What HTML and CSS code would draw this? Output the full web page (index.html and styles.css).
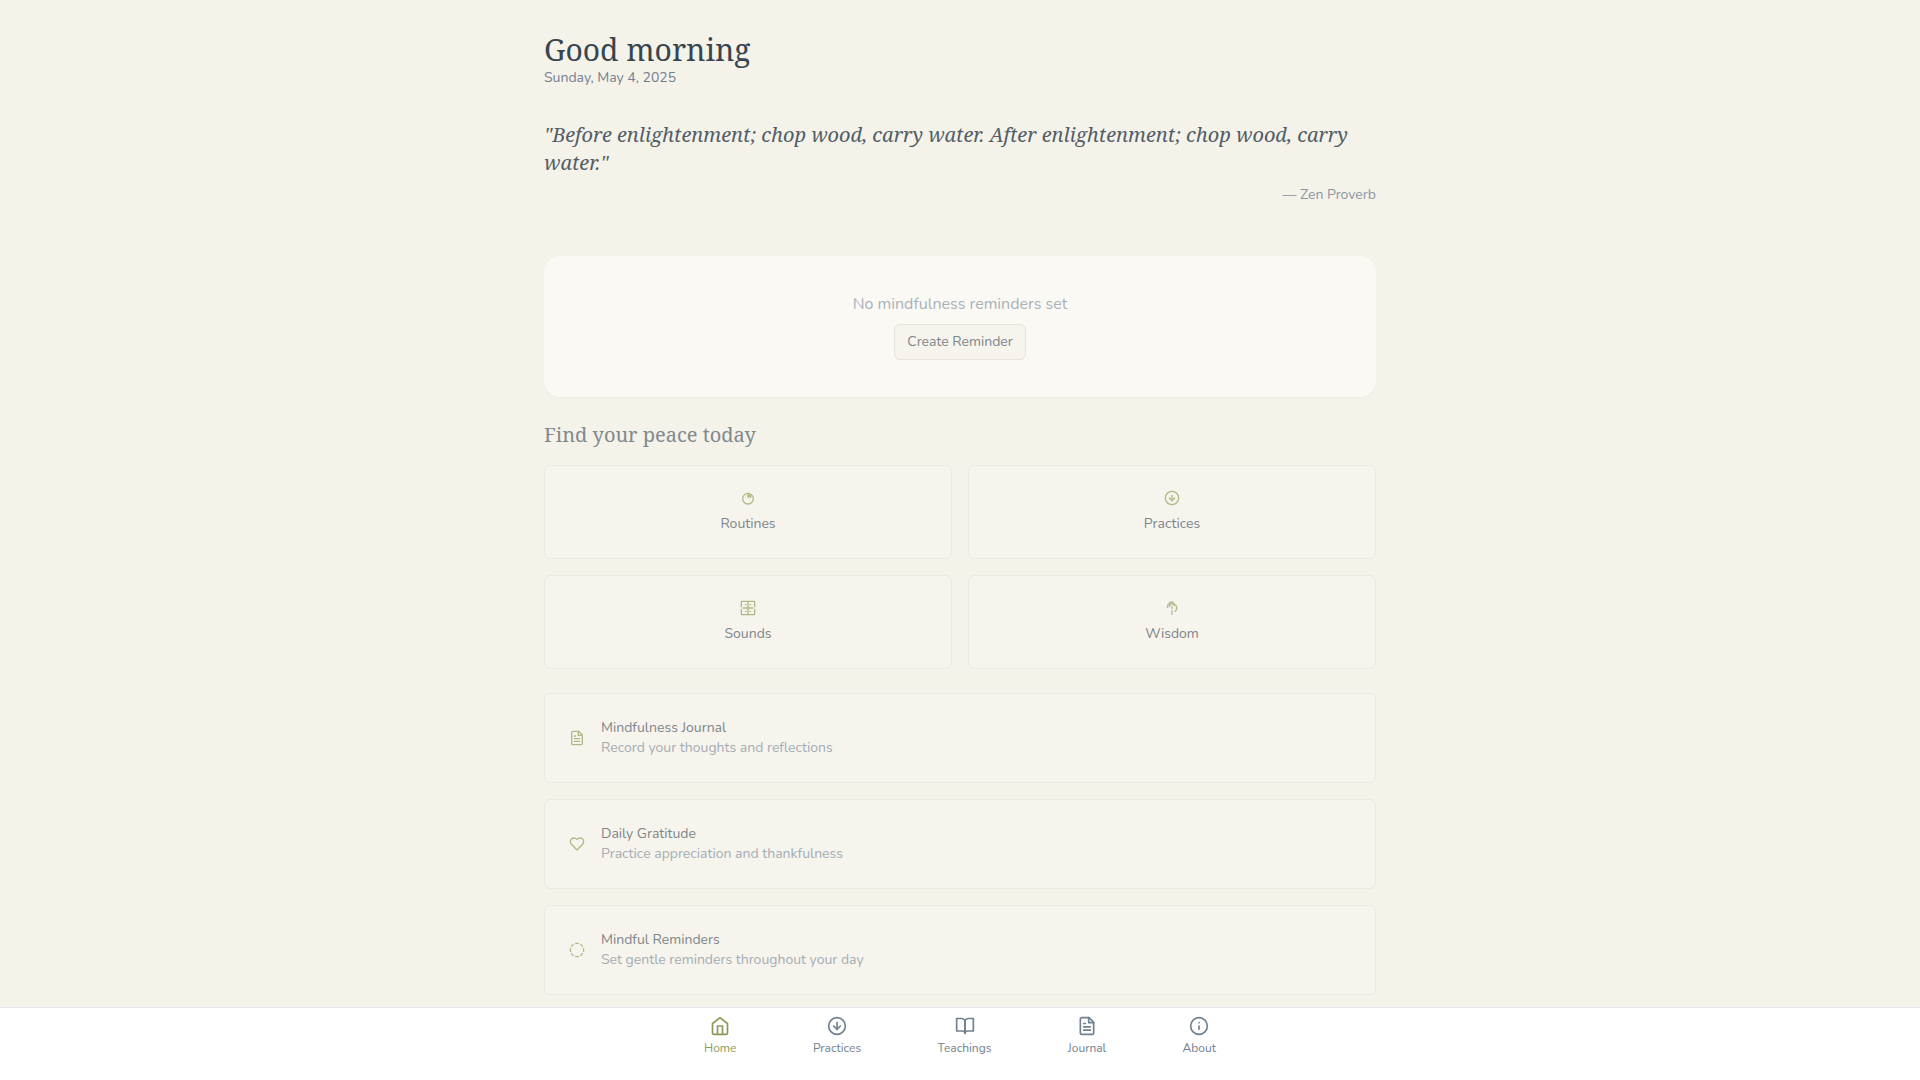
FILE: index.html
```html
<!DOCTYPE html>
<html lang="en">
<head>
    <meta charset="UTF-8">
    <meta name="viewport" content="width=device-width, initial-scale=1.0">
    <title>Good morning</title>
    <link rel="stylesheet" href="styles.css">
</head>
<body>

    <!-- Shared icons -->
    <svg class="sprite" aria-hidden="true">
        <symbol id="icon-practices" viewBox="0 0 24 24">
            <circle cx="12" cy="12" r="10"></circle>
            <path d="M12 8v8"></path>
            <path d="m8 12 4 4 4-4"></path>
        </symbol>
        <symbol id="icon-journal" viewBox="0 0 24 24">
            <path d="M14.5 2H6a2 2 0 0 0-2 2v16a2 2 0 0 0 2 2h12a2 2 0 0 0 2-2V7.500Z"></path>
            <path d="M14 2v6h6"></path>
            <path d="M16 13H8"></path>
            <path d="M16 17H8"></path>
            <path d="M10 9H8"></path>
        </symbol>
    </svg>

    <main class="page">
        <header class="greeting">
            <h1>Good morning</h1>
            <p class="date">Sunday, May 4, 2025</p>
        </header>

        <figure class="quote">
            <blockquote>"Before enlightenment; chop wood, carry water. After enlightenment; chop wood, carry water."</blockquote>
            <figcaption>— Zen Proverb</figcaption>
        </figure>

        <section class="reminder-card">
            <p>No mindfulness reminders set</p>
            <button type="button" class="reminder-button">Create Reminder</button>
        </section>

        <section class="peace">
            <h2>Find your peace today</h2>
            <div class="tiles">
                <a href="#routines" class="tile">
                    <svg class="icon" viewBox="0 0 24 24" aria-hidden="true">
                        <circle cx="12" cy="13" r="8"></circle>
                        <path d="M12 5v6l2-3 2 3V7"></path>
                    </svg>
                    <span>Routines</span>
                </a>
                <a href="#practices" class="tile">
                    <svg class="icon" aria-hidden="true"><use href="#icon-practices"></use></svg>
                    <span>Practices</span>
                </a>
                <a href="#sounds" class="tile">
                    <svg class="icon" viewBox="0 0 24 24" aria-hidden="true">
                        <path d="M2 10V3a1 1 0 0 1 1-1h18a1 1 0 0 1 1 1v7"></path>
                        <path d="M2 14v7a1 1 0 0 0 1 1h18a1 1 0 0 0 1-1v-7"></path>
                        <path d="M12 2v20"></path>
                        <path d="M5 12h14"></path>
                        <path d="M8 7h1"></path>
                        <path d="M15 7h1"></path>
                        <path d="M8 17h1"></path>
                        <path d="M15 17h1"></path>
                    </svg>
                    <span>Sounds</span>
                </a>
                <a href="#wisdom" class="tile">
                    <svg class="icon" viewBox="0 0 24 24" aria-hidden="true">
                        <path d="M5 11c0-3 1-5 3-6 1-2 4-3 6-1"></path>
                        <path d="M8 10c0-2 1-4 4-5l3 3"></path>
                        <path d="M14 6c3 0 5 3 5 6 0 2-1 4-2 5"></path>
                        <path d="M12 10v3"></path>
                        <path d="M12 16v5"></path>
                    </svg>
                    <span>Wisdom</span>
                </a>
            </div>
        </section>

        <section class="links">
            <a href="#journal" class="link-card">
                <svg class="icon" aria-hidden="true"><use href="#icon-journal"></use></svg>
                <span class="link-text">
                    <span class="link-title">Mindfulness Journal</span>
                    <span class="link-note">Record your thoughts and reflections</span>
                </span>
            </a>
            <a href="#gratitude" class="link-card">
                <svg class="icon" viewBox="0 0 24 24" aria-hidden="true">
                    <path d="M19 14c1.490-1.460 3-3.210 3-5.500A5.500 5.500 0 0 0 16.500 3c-1.760 0-3 .5-4.500 2-1.500-1.500-2.740-2-4.500-2A5.500 5.500 0 0 0 2 8.500c0 2.300 1.500 4.050 3 5.500l7 7Z"></path>
                </svg>
                <span class="link-text">
                    <span class="link-title">Daily Gratitude</span>
                    <span class="link-note">Practice appreciation and thankfulness</span>
                </span>
            </a>
            <a href="#reminders" class="link-card">
                <svg class="icon" viewBox="0 0 24 24" aria-hidden="true">
                    <path d="M10.100 2.180a9.930 9.930 0 0 1 3.800 0"></path>
                    <path d="M17.600 3.710a9.950 9.950 0 0 1 2.690 2.700"></path>
                    <path d="M21.820 10.100a9.930 9.930 0 0 1 0 3.800"></path>
                    <path d="M20.290 17.600a9.950 9.950 0 0 1-2.700 2.690"></path>
                    <path d="M13.900 21.820a9.940 9.940 0 0 1-3.800 0"></path>
                    <path d="M6.400 20.290a9.950 9.950 0 0 1-2.690-2.700"></path>
                    <path d="M2.180 13.900a9.930 9.930 0 0 1 0-3.800"></path>
                    <path d="M3.710 6.400a9.950 9.950 0 0 1 2.700-2.690"></path>
                </svg>
                <span class="link-text">
                    <span class="link-title">Mindful Reminders</span>
                    <span class="link-note">Set gentle reminders throughout your day</span>
                </span>
            </a>
        </section>
    </main>

    <nav class="bottom-nav">
        <div class="nav-inner">
            <a href="#home" class="nav-item active">
                <svg class="nav-icon" viewBox="0 0 24 24" aria-hidden="true">
                    <path d="m3 9 9-7 9 7v11a2 2 0 0 1-2 2H5a2 2 0 0 1-2-2z"></path>
                    <path d="M9 22V12h6v10"></path>
                </svg>
                <span>Home</span>
            </a>
            <a href="#practices" class="nav-item">
                <svg class="nav-icon" aria-hidden="true"><use href="#icon-practices"></use></svg>
                <span>Practices</span>
            </a>
            <a href="#teachings" class="nav-item">
                <svg class="nav-icon" viewBox="0 0 24 24" aria-hidden="true">
                    <path d="M2 3h6a4 4 0 0 1 4 4v14a3 3 0 0 0-3-3H2z"></path>
                    <path d="M22 3h-6a4 4 0 0 0-4 4v14a3 3 0 0 1 3-3h7z"></path>
                </svg>
                <span>Teachings</span>
            </a>
            <a href="#journal" class="nav-item">
                <svg class="nav-icon" aria-hidden="true"><use href="#icon-journal"></use></svg>
                <span>Journal</span>
            </a>
            <a href="#about" class="nav-item">
                <svg class="nav-icon" viewBox="0 0 24 24" aria-hidden="true">
                    <circle cx="12" cy="12" r="10"></circle>
                    <path d="M12 16v-4"></path>
                    <path d="M12 8h.01"></path>
                </svg>
                <span>About</span>
            </a>
        </div>
    </nav>

</body>
</html>
```
FILE: styles.css
```css
* {
    box-sizing: border-box;
}

body {
    margin: 0;
    background-color: #f5f2ea;
    color: #36454f;
    font-family: Nunito, "Open Sans", sans-serif;
    font-size: 14px;
    line-height: 20px;
}

h1, h2, p, figure, blockquote {
    margin: 0;
}

a {
    color: inherit;
    text-decoration: none;
}

.sprite {
    display: none;
}

.icon, .nav-icon {
    fill: none;
    stroke: currentColor;
    stroke-width: 2;
    stroke-linecap: round;
    stroke-linejoin: round;
    flex-shrink: 0;
}

.icon {
    width: 16px;
    height: 16px;
    color: #afba87;
}

.nav-icon {
    width: 20px;
    height: 20px;
}

.page {
    max-width: 896px;
    margin: 0 auto;
    padding: 32px 32px 84px;
}

/* Greeting */
.greeting h1 {
    font-family: "Noto Serif", "Liberation Serif", serif;
    font-size: 30px;
    line-height: 36px;
    font-weight: 400;
}

.date {
    color: #708090;
}

/* Quote */
.quote {
    margin-top: 33px;
    padding-bottom: 19px;
}

.quote blockquote {
    font-family: "Noto Serif", "Liberation Serif", serif;
    font-size: 20px;
    line-height: 28px;
    font-style: italic;
    color: #515e66;
}

.quote figcaption {
    margin-top: 8px;
    text-align: right;
    color: #8996a2;
}

/* Reminder card */
.reminder-card {
    display: flex;
    flex-direction: column;
    align-items: center;
    gap: 8px;
    margin-top: 32px;
    padding: 36px 32px 37px;
    border-radius: 16px;
    background-color: #fbf9f4;
    box-shadow: 0 1px 2px rgba(0, 0, 0, 0.03);
}

.reminder-card p {
    font-size: 16px;
    line-height: 24px;
    color: #a9b2ba;
}

.reminder-button {
    height: 36px;
    padding: 0 12px;
    border: 1px solid #e8e3dc;
    border-radius: 6px;
    background-color: #f7f4ed;
    color: #7c868b;
    font: inherit;
    cursor: pointer;
}

/* Tiles */
.peace {
    margin-top: 24px;
}

.peace h2 {
    font-family: "Noto Serif", "Liberation Serif", serif;
    font-size: 20px;
    line-height: 28px;
    font-weight: 400;
    color: #808a8d;
}

.tiles {
    display: grid;
    grid-template-columns: 1fr 1fr;
    gap: 16px;
    margin-top: 16px;
}

.tile {
    display: flex;
    flex-direction: column;
    align-items: center;
    gap: 8px;
    padding: 24px;
    border: 1px solid #ece9e2;
    border-radius: 6px;
    background-color: #f7f4ed;
    color: #7c868b;
}

/* Link cards */
.links {
    display: grid;
    gap: 16px;
    margin-top: 24px;
}

.link-card {
    display: flex;
    align-items: center;
    gap: 16px;
    padding: 24px;
    border: 1px solid #ece9e2;
    border-radius: 6px;
    background-color: #f7f4ed;
}

.link-text {
    display: grid;
}

.link-title {
    color: #7c868b;
}

.link-note {
    color: #a3adb5;
}

/* Bottom navigation */
.bottom-nav {
    position: fixed;
    left: 0;
    right: 0;
    bottom: 0;
    padding: 8px 16px 24px;
    border-top: 1px solid #e5e7eb;
    background-color: #fff;
}

.nav-inner {
    display: flex;
    justify-content: space-between;
    max-width: 512px;
    margin: 0 auto;
}

.nav-item {
    display: flex;
    flex-direction: column;
    align-items: center;
    gap: 4px;
    font-size: 12px;
    line-height: 16px;
    color: #708090;
}

.nav-item.active {
    color: #8a9a5b;
}
```
